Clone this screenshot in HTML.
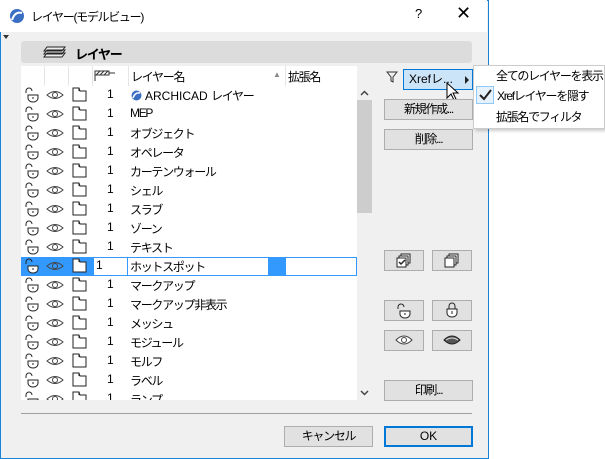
<!DOCTYPE html>
<html><head><meta charset="utf-8"><style>
*{box-sizing:border-box;margin:0;padding:0}
body{width:605px;height:459px;background:#fff;position:relative;overflow:hidden;font-family:"Liberation Sans","Noto Sans CJK JP",sans-serif;font-size:12px;color:#000;letter-spacing:-1.3px}
.a{position:absolute}
.l{letter-spacing:0}
.dlg{left:0;top:0;width:489px;height:459px;border:1px solid #1883d7;background:#f0f0f0}
.tb{left:0;top:0;width:487px;height:32px;background:#fff}
.btn{position:absolute;background:#e1e1e1;border:1px solid #adadad;text-align:center;line-height:18px;font-size:12px}
.row{position:absolute;left:21px;width:336px;height:19px}
.row span{position:absolute;top:1px}
svg{position:absolute}
</style></head><body>
<div class="a dlg"></div>
<div class="a tb"></div>
<svg style="left:9px;top:8px" width="16" height="16"><circle cx="8" cy="8" r="7" fill="#3a6fc4"/><path d="M3 12 Q6 3 13 5" stroke="#fff" stroke-width="2" fill="none"/></svg>
<div class="a" style="left:31px;top:8px">レイヤー(モデルビュー)</div>
<div class="a" style="left:415px;top:6px;font-size:13px">?</div>
<div class="a" style="left:456px;top:3px;font-size:18px">✕</div>
<div class="a" style="left:3px;top:35px;width:0;height:0;border-left:3px solid transparent;border-right:3px solid transparent;border-top:4px solid #333"></div>
<div class="a" style="left:21px;top:41px;width:451px;height:22px;background:#dcdcdc;border-radius:3px"></div>
<svg style="left:43px;top:45px" width="24" height="14"><path d="M4 2h18l-3 4H1z M4 5h18l-3 4H1z M4 8h18l-3 4H1z" fill="#eee" stroke="#222"/></svg>
<div class="a" style="left:75px;top:44px;font-weight:bold;font-size:13px">レイヤー</div>
<div class="a" style="left:21px;top:66px;width:336px;height:334px;background:#fff;overflow:hidden" id="list"></div>
<div class="a" style="left:357px;top:76px;width:15px;height:324px;background:#f0f0f0"></div>
<div class="a" style="left:357px;top:100px;width:15px;height:113px;background:#cdcdcd"></div>
<svg style="left:360px;top:90px" width="9" height="6"><path d="M1 5l3.5-3.5L8 5" stroke="#444" fill="none" stroke-width="1.5"/></svg>
<svg style="left:360px;top:390px" width="9" height="6"><path d="M1 1l3.5 3.5L8 1" stroke="#444" fill="none" stroke-width="1.5"/></svg>
<svg style="left:386px;top:71px" width="12" height="12"><path d="M1 1h10l-4 5v5l-2-1V6z" fill="none" stroke="#333"/></svg>
<div class="btn l" style="left:403px;top:69px;width:70px;height:21px;background:#cce4f7;border-color:#0078d7;text-align:left;padding-left:5px">Xrefレ...</div>
<div class="a" style="left:465px;top:76px;border-top:4px solid transparent;border-bottom:4px solid transparent;border-left:4px solid #222"></div>
<div class="a" style="left:473px;top:65px;width:132px;height:64px;background:#fff;border:1px solid #ccc;box-shadow:2px 2px 3px rgba(0,0,0,.2)"></div>
<div class="a" style="left:496px;top:67px">全てのレイヤーを表示</div>
<div class="a" style="left:476px;top:86px;width:18px;height:18px;border:1px solid #90c8f6;background:#e5f1fb"></div>
<svg style="left:479px;top:89px" width="13" height="12"><path d="M1 6l4 4 7-9" stroke="#222" stroke-width="2" fill="none"/></svg>
<div class="a" style="left:497px;top:87px">Xrefレイヤーを隠す</div>
<div class="a" style="left:496px;top:108px">拡張名でフィルタ</div>
<svg style="left:446px;top:82px" width="14" height="20"><path d="M1 1v15l4-4 3 6 2-1-3-6h5z" fill="#fff" stroke="#000"/></svg>
<div class="btn" style="left:384px;top:99px;width:89px;height:21px">新規作成...</div>
<div class="btn" style="left:384px;top:129px;width:89px;height:21px">削除...</div>
<div class="btn" style="left:384px;top:250px;width:40px;height:21px"></div>
<div class="btn" style="left:432px;top:250px;width:40px;height:21px"></div>
<svg style="left:396px;top:253px" width="16" height="16"><rect x="5" y="1" width="9" height="9" fill="#fff" stroke="#222"/><rect x="3" y="3" width="9" height="9" fill="#fff" stroke="#222"/><rect x="1" y="5" width="9" height="9" fill="#fff" stroke="#222"/><path d="M3 9l2 2 4-4" stroke="#222" fill="none" stroke-width="1.5"/></svg>
<svg style="left:444px;top:253px" width="16" height="16"><rect x="5" y="1" width="9" height="9" fill="#fff" stroke="#222"/><rect x="3" y="3" width="9" height="9" fill="#fff" stroke="#222"/><rect x="1" y="5" width="9" height="9" fill="#fff" stroke="#222"/></svg>
<div class="btn" style="left:384px;top:300px;width:40px;height:21px"></div>
<div class="btn" style="left:432px;top:300px;width:40px;height:21px"></div>
<svg style="left:396px;top:303px" width="16" height="16"><path d="M2 6V4a3 3 0 0 1 6 0" fill="none" stroke="#222"/><path d="M4 8h10v3a5 4 0 0 1-10 0z" fill="#fff" stroke="#222"/><path d="M9 10v2" stroke="#222"/></svg>
<svg style="left:444px;top:302px" width="16" height="16"><path d="M5 7V4a3 3 0 0 1 6 0v3" fill="none" stroke="#222"/><path d="M3 7h10v4a5 4 0 0 1-10 0z" fill="#fff" stroke="#222"/><path d="M8 9v3" stroke="#222"/></svg>
<div class="btn" style="left:384px;top:330px;width:40px;height:21px"></div>
<div class="btn" style="left:432px;top:330px;width:40px;height:21px"></div>
<svg style="left:395px;top:334px" width="18" height="12"><path d="M1 6Q9-2 17 6Q9 14 1 6z" fill="#fff" stroke="#444"/><circle cx="9" cy="6" r="2.5" fill="none" stroke="#444"/></svg>
<svg style="left:443px;top:334px" width="18" height="12"><path d="M1 6Q9-2 17 6Q9 14 1 6z" fill="#555" stroke="#222"/><path d="M3 6Q9 2 15 6" stroke="#ddd" fill="none"/></svg>
<div class="btn" style="left:384px;top:380px;width:89px;height:21px">印刷...</div>
<div class="a" style="left:21px;top:413px;width:451px;height:1px;background:#a0a0a0"></div>
<div class="btn" style="left:284px;top:426px;width:89px;height:21px">キャンセル</div>
<div class="btn l" style="left:384px;top:426px;width:89px;height:21px;border:2px solid #0078d7;line-height:17px">OK</div>
<script>
var L=document.getElementById('list');
var h='<div class="a" style="left:0;top:0;width:336px;height:20px;border-bottom:1px solid #fff"></div>';
[23,47,71,107,264].forEach(function(x){h+='<div class="a" style="left:'+x+'px;top:0;width:1px;height:20px;background:#e5e5e5"></div>'});
h+='<svg style="left:73px;top:4px" width="22" height="12"><rect x="1" y="1" width="14" height="4" fill="#fff" stroke="#333"/><path d="M2 5l4-4M6 5l4-4M10 5l4-4" stroke="#333"/><path d="M1 5v6" stroke="#333"/><path d="M15 3h6" stroke="#333"/></svg>';
h+='<div class="a" style="left:110px;top:2px">レイヤー名</div><div class="a" style="left:252px;top:4px;font-size:8px;color:#888">▲</div><div class="a" style="left:267px;top:2px">拡張名</div>';
var n=['ARCHICAD レイヤー','MEP','オブジェクト','オペレータ','カーテンウォール','シェル','スラブ','ゾーン','テキスト','ホットスポット','マークアップ','マークアップ非表示','メッシュ','モジュール','モルフ','ラベル','ランプ'];
var closed={3:1,10:1,11:1};
n.forEach(function(t,i){
 var y=20+i*19;
 var sel=i==9;
 var eye=closed[i]?'<path d="M1 6Q9-1 17 6Q9 13 1 6z" fill="#555" stroke="#222"/><path d="M3 6Q9 2 15 6" stroke="#ddd" fill="none"/>':'<path d="M1 6Q9-1 17 6Q9 13 1 6z" fill="none" stroke="#444"/><circle cx="9" cy="6" r="2.5" fill="none" stroke="#444"/>';
 h+='<div class="row" style="left:0;top:'+y+'px;'+(sel?'background:#3399ff;':'')+'">';
 h+='<svg style="left:3px;top:1px" width="16" height="16"><path d="M2 6V4a3 3 0 0 1 6 0" fill="none" stroke="#222"/><path d="M4 8h10v3a5 4 0 0 1-10 0z" fill="#fff" stroke="#222"/><path d="M9 10v2" stroke="#222"/></svg>';
 h+='<svg style="left:25px;top:3px" width="18" height="12">'+eye+'</svg>';
 h+='<svg style="left:51px;top:1px" width="16" height="16"><path d="M1 1h6l1 3h6v10H1z" fill="#fff" stroke="#222"/><path d="M7 1v3" stroke="#222"/></svg>';
 if(sel){h+='<div class="a" style="left:72px;top:0;width:264px;height:19px;background:#fff;border:1px solid #3399ff"></div><div class="a" style="left:247px;top:1px;width:18px;height:17px;background:#3399ff"></div><div class="a" style="left:106px;top:1px;width:1px;height:17px;background:#3399ff"></div><span style="left:75px">1</span>';}
 else h+='<span style="left:86px">1</span>';
 if(i==0)h+='<svg style="left:110px;top:4px" width="11" height="11"><circle cx="5.5" cy="5.5" r="5" fill="#3a6fc4"/><path d="M2 8Q4 2 9 3" stroke="#fff" stroke-width="1.5" fill="none"/></svg><span style="left:124px" class="l">ARCHICAD <span style="position:static;letter-spacing:-1.3px">レイヤー</span></span>';
 else h+='<span style="left:109px">'+t+'</span>';
 h+='</div>';
});
L.innerHTML=h;
</script>
</body></html>
